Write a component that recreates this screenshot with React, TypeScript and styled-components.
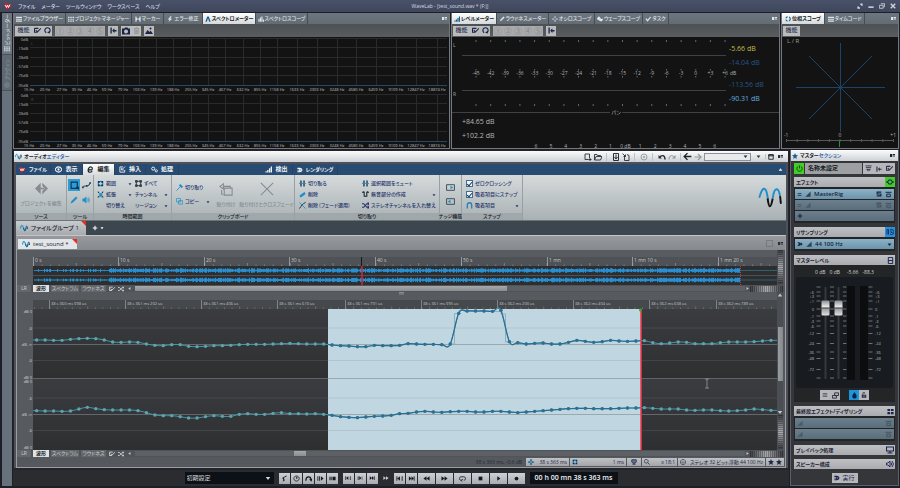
import React from "react";
import styled, { createGlobalStyle, css } from "styled-components";

const GlobalStyle = createGlobalStyle`
  * { box-sizing: border-box; }
  html, body { margin: 0; padding: 0; background: #1d1f28; }
  body, button, input, select {
    font-family: "Open Sans", "Noto Sans CJK JP", sans-serif;
    font-feature-settings: "palt";
    font-size: 5px;
    line-height: 7px;
  }
  button, select, input { border: 0; margin: 0; padding: 0; background: none; color: inherit; }
  a { color: inherit; text-decoration: none; }
  svg { display: block; flex: none; }
`;

/* ---------- icons ---------- */

const blue = "#1d8fcc";

const glyphs: Record<string, React.ReactNode> = {
  logo: (
    <>
      <path d="M1 1 L16 8 L4 16 Z" fill="#d8202c" />
      <path d="M2 6 L5 11 L7 6 L9 11 L12 5" fill="none" stroke="#fff" strokeWidth="1.8" />
    </>
  ),
  list: <path d="M0 2h16v3H0zM0 7h16v3H0zM0 12h16v3H0z" fill="currentColor" />,
  grid: <path d="M0 2h4v3H0zM6 2h4v3H6zM12 2h4v3h-4zM0 7h4v3H0zM6 7h4v3H6zM12 7h4v3h-4zM0 12h4v3H0zM6 12h4v3H6zM12 12h4v3h-4z" fill="currentColor" />,
  marker: <path d="M1 1h3v14H1zM12 1h3v14h-3zM4 4l4 4-4 4zM12 4L8 8l4 4z" fill="currentColor" />,
  bolt: <path d="M10 0L2 9h5l-3 7 10-9H9l3-7z" fill="currentColor" />,
  peak: <path d="M1 15L6 1h4l5 14h-4L8 6l-3 9z" fill="currentColor" />,
  bars: <path d="M1 8h3v7H1zM5 4h3v11H5zM9 1h3v14H9zM13 9h3v6h-3z" fill="currentColor" />,
  steps: <path d="M1 12h3v3H1zM5 9h3v6H5zM9 5h3v10H9zM13 1h3v14h-3z" fill="currentColor" />,
  pen: <path d="M2 14l2-5 8-8 3 3-8 8z" fill="currentColor" />,
  cross4: <path d="M8 0l3 4H5zM8 16l3-4H5zM0 8l4-3v6zM16 8l-4-3v6zM7 7h2v2H7z" fill="currentColor" />,
  wave: <path d="M0 8c2-8 6-8 8-5s5 8 8 3c0 9-5 9-8 7S2 11 0 8z" fill="currentColor" />,
  check: <path d="M1 8l3-2 3 4 7-9 2 2-9 12z" fill="currentColor" />,
  scope: <circle cx="8" cy="8" r="6" fill="none" stroke="currentColor" strokeWidth="3" strokeDasharray="6 3.4" />,
  menu: <path d="M0 3h7v10H0zM9 3h7v3H9zM9 7h7v2H9zM9 11h7v2H9z" fill="currentColor" />,
  checkbox: <path d="M1 3h9M1 3v9h7M4 7l4 4 8-8" fill="none" stroke="currentColor" strokeWidth="2.6" />,
  loop: <path d="M5 13a6 6 0 1 1 6 0M8 12l4 1v-4" fill="none" stroke="currentColor" strokeWidth="2.6" />,
  snapLeft: <path d="M1 1h3v14H1zM5 8l5-5v4h5v3h-5v4z" fill="currentColor" />,
  camera: <path fillRule="evenodd" d="M0 3h5l1-2h5l1 2h4v12H0zM8 5a4 4 0 1 0 .1 0z" fill="currentColor" />,
  trash: <path d="M2 4h12M6 2h4M4 4v11h8V4M7 7v6M9 7v6" fill="none" stroke="currentColor" strokeWidth="1.6" />,
  picture: <path d="M0 14l5-8 4 4 2-3 5 7zM9 3a2 2 0 1 0 4 0 2 2 0 1 0-4 0" fill="currentColor" />,
  expand: <path d="M9 1h6v6h-4V5H9zM1 9h4v2h3v4H1z" fill="currentColor" />,
  min: <path d="M1 9h14v4H1z" fill="currentColor" />,
  restore: <path d="M5 2h10v8h-3M1 6h10v8H1z" fill="none" stroke="currentColor" strokeWidth="2.2" />,
  close: <path d="M2 2l12 12M14 2L2 14" stroke="currentColor" strokeWidth="3.4" />,
  sine: (
    <>
      <path d="M1 9C2 1 5 1 7 8s4 7 5 0" fill="none" stroke={blue} strokeWidth="2.2" />
      <path d="M7 8c2 8 4 7 5 0s3-4 3 2" fill="none" stroke="#1c5a80" strokeWidth="2" />
    </>
  ),
  bigSine: (
    <>
      <path d="M1 8C3 1 5 1 6 6l.6 3" fill="none" stroke={blue} strokeWidth="1.3" strokeLinecap="round" />
      <path d="M6.400 9c1 7 2 7 3.400 0" fill="none" stroke="#111" strokeWidth="1.300" />
      <path d="M9.800 9c1-8 4-8 5-1" fill="none" stroke={blue} strokeWidth="1.300" />
      <path d="M14.800 8l.4 4" fill="none" stroke="#111" strokeWidth="1.300" strokeLinecap="round" />
    </>
  ),
  eye: (
    <>
      <path d="M0 8c4-8 12-8 16 0-4 8-12 8-16 0z" fill="none" stroke="currentColor" strokeWidth="2.4" />
      <circle cx="8" cy="8" r="2.600" fill="currentColor" />
    </>
  ),
  editE: <path d="M3 9h8c4-7-5-10-8-2-2 8 4 9 9 5" fill="none" stroke="currentColor" strokeWidth="2.600" />,
  insert: <path d="M9 2H2v12h11V9M14 1L7 8M6 4v5h5" fill="none" stroke="currentColor" strokeWidth="2" />,
  gears: (
    <>
      <circle cx="5" cy="6" r="3.500" fill="none" stroke="currentColor" strokeWidth="2.200" />
      <circle cx="12" cy="11" r="2.600" fill="none" stroke="currentColor" strokeWidth="2" />
    </>
  ),
  render: <path fillRule="evenodd" d="M1 2h6c10 0 10 12 0 12H1v-3h5V9H1V7h5V5H1zM9 6v4l3-2z" fill="currentColor" />,
  source: <path d="M7 1v14L0 8zM9 1l7 7-7 7v-4l3-3-3-3zM2 7h9v2H2z" fill="currentColor" />,
  selectBox: <path d="M2 2h11v11H2zM11 11h4v4" fill="none" stroke="#10334e" strokeWidth="2" />,
  curve: (
    <>
      <path d="M1 11c5-6 9 3 14-8" fill="none" stroke="#30557a" strokeWidth="1.800" />
      <path d="M0 10h3v3H0zM7 7h3v3H7zM13 2h3v3h-3z" fill="#26415e" />
    </>
  ),
  pencil: <path d="M1 15l2-5 9-9 3 3-9 9z" fill={blue} />,
  speaker: (
    <>
      <path d="M1 5h3l5-4v14l-5-4H1z" fill={blue} />
      <path d="M11 5q3 3 0 6M13 3q4 5 0 10" fill="none" stroke={blue} strokeWidth="1.600" />
    </>
  ),
  range: (
    <>
      <circle cx="8" cy="8" r="5" fill="none" stroke={blue} strokeWidth="3" />
      <path d="M2 2h4v4H2zM10 2h4v4h-4zM2 10h4v4H2zM10 10h4v4h-4z" fill="#142b44" />
    </>
  ),
  extend: (
    <>
      <path d="M1 1l5 1-3 3zM15 1l-5 1 3 3zM1 15l5-1-3-3zM15 15l-5-1 3-3z" fill="#142b44" />
      <path d="M5 5h7v8H5z" fill={blue} />
    </>
  ),
  all: <path d="M3 3h10v10H3zM1 1h4v4H1zM11 1h4v4h-4zM1 11h4v4H1zM11 11h4v4h-4z" fill="none" stroke="#1b2430" strokeWidth="1.800" />,
  cut: <path d="M1 15L9 7M8 2l6 6M10 1l5 5-3 2-4-4z" fill={blue} stroke={blue} strokeWidth="2" />,
  copy: <path d="M1 1h9v8H1zM6 6h9v8H6z" fill="none" stroke={blue} strokeWidth="1.600" />,
  paste: <path d="M5 5V2L1 5l4 3V5h8v2M3 9v5h2M6 7h9v8H6z" fill="none" stroke="currentColor" strokeWidth="1.200" />,
  bigX: <path d="M1 1l14 14M15 1L1 15" stroke="currentColor" strokeWidth="1.200" />,
  trim: (
    <>
      <path d="M3 1h3v14H3zM10 1h3v14h-3z" fill="#16324c" />
      <path d="M0 7h16v2H0z" fill={blue} />
    </>
  ),
  erase: <path d="M1 11L8 5l5-3 2 5-8 6-4 2z" fill={blue} />,
  fadeX: (
    <>
      <path d="M1 1l14 14" stroke={blue} strokeWidth="2" />
      <path d="M15 1C8 4 6 8 1 15" fill="none" stroke="#1b2430" strokeWidth="2" />
    </>
  ),
  silence: <path d="M0 3h5v9h6V3h5M5 3l-2-2M11 3l2-2" fill="none" stroke="#16222e" strokeWidth="2.400" />,
  swap: <path d="M0 4h4l7 8h5M0 12h4l7-8h5M13 1l3 3-3 3M13 9l3 3-3 3" fill="none" stroke="currentColor" strokeWidth="2.400" />,
  nudgeR: (
    <>
      <path d="M1 3h14v10H1z" fill="none" stroke="#39444d" strokeWidth="1.600" />
      <path d="M8 5v6l5-3z" fill={blue} />
    </>
  ),
  nudgeL: (
    <>
      <path d="M1 3h14v10H1z" fill="none" stroke="#39444d" strokeWidth="1.600" />
      <path d="M8 5v6L3 8z" fill={blue} />
    </>
  ),
  magnet: <path d="M3 15V7c0-7 10-7 10 0v8" fill="none" stroke="#2b7fb4" strokeWidth="3" />,
  newDoc: <path d="M11 10V2H2v11h7M9 13h6M12 10v6" fill="none" stroke="currentColor" strokeWidth="1.800" />,
  folder: <path d="M1 14V3h5l1 2h6v2M1 14l3-7h12l-3 7z" fill="none" stroke="currentColor" strokeWidth="1.800" />,
  save: <path d="M3 1h10v14H3zM8 3v7M5 8l3 4 3-4" fill="none" stroke="currentColor" strokeWidth="2" />,
  saveAs: <path d="M5 5v10h9V5L10 3M1 1l6 6M7 3v4H3" fill="none" stroke="currentColor" strokeWidth="1.800" />,
  disc: (
    <>
      <circle cx="8" cy="8" r="6" fill="none" stroke="currentColor" strokeWidth="1.800" />
      <circle cx="8" cy="8" r="2" fill="currentColor" />
    </>
  ),
  undo: (
    <>
      <path d="M1 4v7h7z" fill="currentColor" />
      <path d="M3 9c4-6 11-5 11 4" fill="none" stroke="currentColor" strokeWidth="2.800" />
    </>
  ),
  redo: (
    <>
      <path d="M15 4v7H8z" fill="currentColor" />
      <path d="M13 9C9 3 2 4 2 13" fill="none" stroke="currentColor" strokeWidth="2" />
    </>
  ),
  left: <path d="M8 2L2 8l6 6M2 8h13" fill="none" stroke="currentColor" strokeWidth="2.400" />,
  right: <path d="M8 2l6 6-6 6M14 8H1" fill="none" stroke="currentColor" strokeWidth="2.400" />,
  down: <path d="M2 5h12l-6 8z" fill="currentColor" />,
  up: <path d="M2 12h12L8 4z" fill="currentColor" />,
  triL: <path d="M11 3v10L4 8z" fill="currentColor" />,
  triR: <path d="M5 3v10l7-5z" fill="currentColor" />,
  windowBox: <path d="M2 2h12v3H2zM2 2h12v12H2z" fill="none" stroke="currentColor" strokeWidth="2.400" />,
  frame: <path d="M1 1h14v14H1z" fill="none" stroke="currentColor" strokeWidth="1.600" />,
  star: <path d="M8 0l2.300 5.500 5.700.4-4.400 3.800L13 16 8 12.600 3 16l1.400-6.300L0 5.900l5.700-.4z" fill="currentColor" />,
  power: <path d="M5 3a6 6 0 1 0 6 0M8 1v7" fill="none" stroke="currentColor" strokeWidth="2" />,
  plus: <path d="M8 2v12M2 8h12" stroke="currentColor" strokeWidth="2.800" />,
  bypass: <path d="M1 3h14M4 7h8v6H4z" fill="none" stroke="currentColor" strokeWidth="2.200" />,
  filter: <path d="M1 2h14M2 6h12M8 14l-4-4h8z" fill="none" stroke="currentColor" strokeWidth="2" />,
  link: <path d="M0 8h3M13 8h3M6 4h4l3 4-3 4H6L3 8z" fill="none" stroke="currentColor" strokeWidth="2.200" />,
  eq: <path d="M2 5h12M2 11h12" stroke="currentColor" strokeWidth="2.400" />,
  ramp: <path d="M1 15L15 1v14z" fill="currentColor" fillOpacity=".75" />,
  solo: <path d="M14 3H3v5h10v5H2" fill="none" stroke="currentColor" strokeWidth="3" />,
  hifi: <path d="M2 3v10M2 3h3v10M8 4a5 5 0 1 1 0 8M10 5v4h3" fill="none" stroke="currentColor" strokeWidth="1.800" />,
  resample: <path d="M1 3h5l5 5-5 5H1l4-5zM10 3l5 5-5 5" fill="currentColor" />,
  strip: <path d="M3 1h10v14H3zM3 8h10" fill="none" stroke="currentColor" strokeWidth="2.200" />,
  copies: <path d="M6 2h9v6H6zM1 8h9v6H1z" fill="none" stroke="currentColor" strokeWidth="2.200" />,
  drop: <path d="M8 0c2 5 5 6 5 10a5 5 0 0 1-10 0c0-4 3-5 5-10z" fill="currentColor" />,
  lock: <path fillRule="evenodd" d="M2 7h12v8H2zM7 9h2v4H7zM4 7V4c0-4 7-4 7-1v1H9c0-2-3-2-3 0v3z" fill="currentColor" />,
  quad: <path d="M1 2h6v5H1zM9 2h6v5H9zM1 9h6v5H1zM9 9h6v5H9z" fill="currentColor" />,
  monitor: <path d="M1 2h14v8H1zM8 10v4M3 14h10" fill="none" stroke="currentColor" strokeWidth="2.200" />,
  speakerOut: <path d="M1 6h3l4-4v12l-4-4H1zM10 5q3 3 0 6M12 2q6 6 0 12" fill="none" stroke="currentColor" strokeWidth="1.800" />,
  tap: (
    <>
      <path d="M3 6h4v8z" fill="currentColor" />
      <path d="M4 7l9-5M4 14l5-3" fill="none" stroke="currentColor" strokeWidth="2" />
    </>
  ),
  clock: <path d="M8 2a6 6 0 1 0 .1 0zM8 4v4l3-2" fill="none" stroke="currentColor" strokeWidth="1.800" />,
  arc: <path d="M2 13C2 2 13 2 14 11M11 9l3 4 2-4" fill="none" stroke="currentColor" strokeWidth="2.800" />,
  barsPlay: <path d="M1 3h2v10H1zM5 3h2v10H5zM9 3l6 5-6 5z" fill="currentColor" />,
  barsStop: <path d="M1 4h2v8H1zM4 4h2v8H4zM8 4h7v8H8z" fill="currentColor" />,
  toStart: <path d="M1 3h2v10H1zM9 3v10L3 8zM13 3h2v10h-2z" fill="currentColor" />,
  stepPlay: <path d="M2 3h2v10H2zM6 3l6 5-6 5zM13 3h1v10h-1z" fill="currentColor" />,
  toEnd: <path d="M13 3h2v10h-2zM2 3l6 5-6 5zM8 3l5 5-5 5z" fill="currentColor" />,
  rew: <path d="M8 3v10L1 8zM15 3v10L8 8z" fill="currentColor" />,
  ffw: <path d="M1 3v10l7-5zM8 3v10l7-5z" fill="currentColor" />,
  cycle: <path d="M5 12C-2 11 0 4 6 4h4c6 0 7 7 1 8M7 15l-2-3 4-2" fill="none" stroke="currentColor" strokeWidth="2" />,
  stop: <path d="M2 2h12v12H2z" fill="currentColor" />,
  play: <path d="M4 1v14l10-7z" fill="currentColor" />,
  rec: <circle cx="8" cy="8" r="6" fill="currentColor" />,
  cursorIcon: (
    <>
      <path d="M8 0v16M1 8h14" stroke={blue} strokeWidth="2.400" />
      <path d="M8 0l3 4H5zM8 16l3-4H5zM0 8l4-3v6zM16 8l-4-3v6z" fill="#1d3e66" />
    </>
  ),
  cup: <path d="M2 2h12v6l-3 3H5L2 8zM4 14h8M8 11v3" fill="#65758e" stroke="currentColor" strokeWidth="2" />,
  zoom: <path d="M6 1a5 5 0 1 0 .1 0zM10 10l5 5" fill="none" stroke="currentColor" strokeWidth="2" />,
  sound: <path d="M8 1a7 7 0 1 0 .1 0zM4 9q4 4 8 0M5 6h2M9 6h2" fill="none" stroke="currentColor" strokeWidth="1.600" />,
};

const Icon = ({ name, size = 7, color }: { name: string; size?: number; color?: string }) => (
  <svg viewBox="0 0 16 16" width={size} height={size} color={color} aria-hidden="true">
    {glyphs[name]}
  </svg>
);

/* ---------- frame ---------- */

const Shell = styled.div`
  display: flex;
  flex-direction: column;
  min-height: 100vh;
  background: #1d1f28;
  color: #c9ccd0;
  overflow: hidden;
`;

const TitleBar = styled.header`
  display: grid;
  grid-template-columns: 1fr auto 1fr;
  align-items: center;
  height: 12px;
  padding: 0 4px;
  background: linear-gradient(#495169, #3f475c);
  color: #d8dbe2;
  font-weight: 500;
`;

const Menu = styled.nav`
  display: flex;
  align-items: center;
  gap: 6px;
`;

const WindowControls = styled.div`
  display: flex;
  justify-content: flex-end;
  gap: 5px;
  color: #d5d8de;
`;

const PlainButton = styled.button`
  display: flex;
  align-items: center;
  justify-content: center;
`;

const Body = styled.div`
  flex: 1;
  display: flex;
  gap: 1px;
  padding: 1px 1px 2px 2px;
`;

const Rail = styled.aside`
  width: 10px;
  flex: none;
  display: flex;
  flex-direction: column;
  background: #67717b;
`;

const RailTab = styled.button<{ $dim?: boolean }>`
  writing-mode: vertical-rl;
  text-orientation: sideways;
  transform: rotate(180deg);
  display: flex;
  align-items: center;
  gap: 1px;
  width: 10px;
  padding: 2px 0;
  height: ${(p) => (p.$dim ? 36 : 42)}px;
  white-space: nowrap;
  color: ${(p) => (p.$dim ? "#8f989f" : "#e6e9ec")};
  background: ${(p) => (p.$dim ? "#5f6972" : "#6d7781")};
  border-top: 1px solid #4a535c;
`;

const Main = styled.div`
  flex: 1;
  min-width: 0;
  display: flex;
  flex-direction: column;
  gap: 1px;
`;

const MeterRow = styled.div`
  display: grid;
  grid-template-columns: minmax(0, 437fr) minmax(0, 329fr) minmax(0, 118fr);
  gap: 1px;
`;

const Panel = styled.section`
  display: flex;
  flex-direction: column;
  border: 1px solid #74777b;
  border-top: 0;
  background: #131313;
`;

const TabStrip = styled.div`
  display: flex;
  height: 11px;
  background: linear-gradient(#6d7680, #626c74);
  color: #e0e4e7;
`;

const Tab = styled.button<{ $w: number; $on?: boolean }>`
  display: flex;
  align-items: center;
  justify-content: center;
  gap: 1px;
  width: ${(p) => p.$w}px;
  flex: none;
  white-space: nowrap;
  font-weight: 500;
  border-right: 1px solid #454c54;
  ${(p) =>
    p.$on &&
    css`
      background: linear-gradient(#fff, #d5d8da);
      color: #14181c;
      font-weight: 700;
    `}
`;

const Spacer = styled.span`
  flex: 1;
`;

const StripMenu = styled(PlainButton)`
  width: 9px;
  color: #e3e6e8;
`;

const Tools = styled.div`
  display: flex;
  align-items: center;
  gap: 3px;
  height: 13px;
  padding: 0 1px;
  background: linear-gradient(#4e5153, #5a5d60);
`;

const ToolSet = styled.div<{ $muted?: boolean }>`
  display: flex;
  height: 10px;
  background: ${(p) => (p.$muted ? "#a9aaab" : "#b9bbbd")};
  color: ${(p) => (p.$muted ? "#8d8e90" : "#1b2447")};
`;

const ToolButton = styled(PlainButton)<{ $w?: number; $dim?: boolean }>`
  width: ${(p) => p.$w ?? 10}px;
  font-size: ${(p) => (p.$dim ? 8 : 6)}px;
  ${(p) => p.$dim && "color: #85868a;"}
`;

const Chart = styled.svg`
  width: 100%;
  height: auto;
  flex: none;
  text {
    font-family: "Open Sans", "Noto Sans CJK JP", sans-serif;
  }
`;

const PanelTabs = ({ tabs }: { tabs: [string, string, number, boolean?][] }) => (
  <TabStrip role="tablist">
    {tabs.map(([icon, label, w, on]) => (
      <Tab key={label} role="tab" aria-selected={!!on} $w={w} $on={on}>
        <Icon name={icon} size={6} color={on ? "#14608f" : undefined} />
        {label}
      </Tab>
    ))}
    <Spacer />
    <StripMenu aria-label="パネルメニュー">
      <Icon name="menu" size={5} />
    </StripMenu>
  </TabStrip>
);

const PanelTools = ({ capture, presets = true }: { capture?: boolean; presets?: boolean }) => (
  <Tools>
    <ToolSet>
      <ToolButton $w={17}>機能</ToolButton>
      {presets && (
        <>
          <ToolButton aria-label="設定">
            <Icon name="checkbox" />
          </ToolButton>
          <ToolButton aria-label="リセット">
            <Icon name="loop" />
          </ToolButton>
        </>
      )}
    </ToolSet>
    {presets && (
      <>
        <ToolSet $muted>
          {["①", "②", "③", "④", "⑤"].map((n) => (
            <ToolButton key={n} $dim>
              {n}
            </ToolButton>
          ))}
        </ToolSet>
        <ToolSet>
          <ToolButton aria-label="先頭へ">
            <Icon name="snapLeft" />
          </ToolButton>
        </ToolSet>
      </>
    )}
    {capture && (
      <>
        <ToolSet>
          <ToolButton aria-label="スナップショット">
            <Icon name="camera" size={8} />
          </ToolButton>
          <ToolButton aria-label="削除" $dim>
            <Icon name="trash" />
          </ToolButton>
        </ToolSet>
        <ToolSet>
          <ToolButton aria-label="画像">
            <Icon name="picture" size={8} />
          </ToolButton>
        </ToolSet>
      </>
    )}
  </Tools>
);

/* ---------- meters ---------- */

const freqs: [number, string][] = [
  [29, "15 Hz"], [45, "20 Hz"], [62, "27 Hz"], [77, "35 Hz"], [92, "46 Hz"], [107, "59 Hz"], [123, "79 Hz"],
  [139, "103 Hz"], [156, "139 Hz"], [173, "188 Hz"], [191, "255 Hz"], [208, "345 Hz"], [225, "467 Hz"],
  [243, "632 Hz"], [260, "855 Hz"], [277, "1158 Hz"], [297, "1633 Hz"], [317, "2303 Hz"], [337, "3248 Hz"],
  [356, "4580 Hz"], [376, "6459 Hz"], [396, "9109 Hz"], [416, "12847 Hz"], [437, "18874 Hz"],
];

const Spectrometer = () => (
  <Chart viewBox="14 37 435 111" role="img" aria-label="スペクトロメーター">
    {[0, 56].map((dy) => (
      <g key={dy}>
        {["0dB", "-19dB", "-38dB", "-57dB", "-76dB", "-95dB"].map((t, i) => (
          <g key={t}>
            <text x="28" y={40.500 + dy + i * 9.200} fontSize="4" fill="#b0b0b0" textAnchor="end">
              {t}
            </text>
            <path d={`M30 ${38.500 + dy + Math.round(i * 9.300)}H447`} stroke={i === 5 ? "#234868" : "#2a2a2a"} />
          </g>
        ))}
        {freqs.map(([x, t], i) => (
          <g key={t}>
            {i > 0 && <path d={`M${x + 0.500} ${39 + dy}v46`} stroke="#2a2a2a" />}
            <text x={x} y={91 + dy} fontSize="4" fill="#c0c0c0" textAnchor="middle">
              {t}
            </text>
          </g>
        ))}
        <text x="31" y={45 + dy} fontSize="4" fill="#4c4c4c">
          {dy ? "R" : "L"}
        </text>
      </g>
    ))}
  </Chart>
);

const levelX = (i: number) => 476 + i * 14.650;

const LevelMeter = () => (
  <Chart viewBox="452 37 327 111" role="img" aria-label="レベルメーター">
    <g fill="#9c9ea0" fontSize="5">
      <text x="453" y="47">L</text>
      <text x="453" y="96">R</text>
    </g>
    <path d="M462 55.500H726M462 90.500H726M452 112.500H610M622 112.500H779" stroke="#3f4042" />
    {Array.from({ length: 18 }, (_, i) => {
      const v = -45 + i * 3;
      return (
        <g key={i}>
          <path d={`M${levelX(i)} 40v2M${levelX(i)} 104v2M${levelX(i)} 69v1.500M${levelX(i)} 76v1.500`} stroke="#66696b" />
          <text x={levelX(i)} y="75" fontSize="5" fill="#b0b2b4" textAnchor="middle">
            {v > 0 ? `+${v}` : v}
          </text>
        </g>
      );
    })}
    <g fontSize="5" fill="#b0b2b4">
      <text x="730" y="75">dB</text>
      <text x="616" y="114" textAnchor="middle">パン</text>
      {["6", "5", "4", "3", "2", "1", "0 dB", "1", "2", "3", "4", "5", "6"].map((t, i) => (
        <text key={i} x={536 + i * 14.900} y="147.500" textAnchor="middle">
          {t}
        </text>
      ))}
    </g>
    <g fontSize="7">
      <text x="462" y="124" fill="#b5b7b9">+84.65 dB</text>
      <text x="462" y="138" fill="#b5b7b9">+102.2 dB</text>
      <text x="729" y="51" fill="#c0bb4e">-5.66 dB</text>
      <text x="729" y="65" fill="#285583">-14.04 dB</text>
      <text x="729" y="87" fill="#285583">-113.56 dB</text>
      <text x="729" y="101" fill="#60b0e4">-90.31 dB</text>
    </g>
  </Chart>
);

const PhaseScope = () => (
  <Chart viewBox="782 37 116 111" role="img" aria-label="位相スコープ">
    <path d="M796 87.500H885M840.500 43V132M809 56L872 119M872 56L809 119" stroke="#1e4368" />
    <text x="787" y="43" fontSize="6" fill="#9c9ea0">L / R</text>
    <path d="M786 140.500H894" stroke="#55585a" />
    {Array.from({ length: 11 }, (_, i) => (
      <path key={i} d={`M${786.500 + i * 10.700} 139v3`} stroke="#55585a" />
    ))}
    <g fontSize="5" fill="#b0b2b4">
      <text x="784" y="137">-1</text>
      <text x="840" y="137" textAnchor="middle">0</text>
      <text x="896" y="137" textAnchor="end">+1</text>
    </g>
    <path d="M839.500 141v6" stroke="#1c9a2c" />
  </Chart>
);

/* ---------- editor ---------- */

const LowerRow = styled.div`
  flex: 1;
  display: grid;
  grid-template-columns: minmax(0, 1fr) 109px;
  gap: 1px;
`;

const EditorColumn = styled.div`
  display: flex;
  flex-direction: column;
  background: #2b2c30;
`;

const EditorWindow = styled.section`
  border: 1px solid #23252b;
  border-bottom-width: 2px;
  background: #4d5056;
`;

const EditorTitle = styled.div`
  display: flex;
  align-items: center;
  height: 11px;
  padding: 0 3px 0 1px;
  gap: 2px;
  background: linear-gradient(#fbfbfb, #cdd1d5);
  color: #20252b;
`;

const Heading = styled.h2`
  margin: 0;
  font-size: 5px;
  font-weight: 700;
  white-space: nowrap;
  color: #1b2026;
  span {
    color: #3c6ba8;
  }
`;

const TitleTools = styled.div`
  display: flex;
  gap: 2px;
  padding: 0 4px 0 3px;
  border-right: 1px solid #bfc3c7;
  color: #2b3036;
`;

const Dim = styled(PlainButton)`
  color: #94989c;
`;

const SelectBox = styled.label<{ $w: number; $dark?: boolean }>`
  position: relative;
  display: flex;
  align-items: center;
  width: ${(p) => p.$w}px;
  height: ${(p) => (p.$dark ? 12 : 8)}px;
  background: ${(p) => (p.$dark ? "#0b1117" : "#e8eaec")};
  border: 1px solid ${(p) => (p.$dark ? "#0b1117" : "#8d9298")};
  color: ${(p) => (p.$dark ? "#d5d8dc" : "#1c2b46")};
  select {
    appearance: none;
    width: 100%;
    height: 100%;
    outline: 0;
    font-size: 6px;
    padding-left: 1px;
  }
  svg {
    position: absolute;
    right: 2px;
    pointer-events: none;
  }
`;

const EditorBody = styled.div`
  margin: 2px 2px 0;
`;

const RibbonTabs = styled.div`
  display: flex;
  height: 11px;
  background: #284b72;
  color: #f0f4f8;
`;

const RibbonTab = styled.button<{ $w: number; $on?: boolean; $kana?: boolean }>`
  display: flex;
  align-items: center;
  justify-content: center;
  gap: 3px;
  width: ${(p) => p.$w}px;
  font-size: ${(p) => (p.$kana ? 5 : 6)}px;
  font-weight: 700;
  border-right: 1px solid #23436a;
  white-space: nowrap;
  ${(p) => p.$on && "background: linear-gradient(#fff, #d9dcdc); color: #16202c;"}
`;

const Ribbon = styled.div`
  display: flex;
  height: 46px;
  background: linear-gradient(#d6dadb, #a8b1b4);
  color: #24336a;
  border-bottom: 1px solid #6d7477;
  button,
  label {
    font-weight: 500;
  }
`;

const Group = styled.div<{ $w: number }>`
  display: flex;
  flex-direction: column;
  width: ${(p) => p.$w}px;
  flex: none;
  border-right: 1px solid #98a0a3;
`;

const GroupBody = styled.div<{ $cols: string }>`
  flex: 1;
  display: grid;
  grid-template-columns: ${(p) => p.$cols};
  align-items: center;
  padding: 2px 0 1px;
`;

const GroupName = styled.div`
  display: flex;
  justify-content: center;
  height: 7px;
  white-space: nowrap;
  font-weight: 500;
  color: #10151a;
  background: #a0a8ab;
`;

const Stack = styled.div<{ $pad?: number }>`
  display: flex;
  flex-direction: column;
  justify-content: space-evenly;
  height: 100%;
  padding-left: ${(p) => p.$pad ?? 0}px;
`;

const Command = styled.button`
  display: flex;
  align-items: center;
  gap: 2px;
  height: 9px;
  padding-right: 3px;
  white-space: nowrap;
  i {
    width: 7px;
    flex: none;
  }
`;

const BigCommand = styled.button`
  display: flex;
  flex-direction: column;
  align-items: center;
  gap: 5px;
  color: #858b90;
  white-space: nowrap;
`;

const IconPad = styled.div`
  display: grid;
  grid-template-columns: 1fr 1fr;
  grid-auto-rows: 15px;
  padding: 2px 1px 0;
  align-self: start;
`;

const PadButton = styled(PlainButton)<{ $on?: boolean }>`
  width: 12px;
  height: 12px;
  ${(p) => p.$on && "background: #2c9bd6;"}
`;

const CheckLabel = styled.label`
  display: flex;
  align-items: center;
  gap: 2px;
  height: 9px;
  white-space: nowrap;
  input {
    appearance: none;
    position: relative;
    width: 7px;
    height: 7px;
    background: #f4f7f9;
    border: 1px solid #3f6f96;
  }
  input:checked::after {
    content: "";
    position: absolute;
    left: 1px;
    top: 0;
    width: 2px;
    height: 4px;
    border: solid #17395c;
    border-width: 0 1px 1px 0;
    transform: rotate(40deg);
  }
`;

const RibbonLogo = styled.div`
  margin: 10px 4px 0 auto;
`;

const GroupBar = styled.div`
  display: flex;
  align-items: center;
  height: 14px;
  background: #3c464e;
  color: #fff;
`;

const FileTab = styled.button<{ $small?: boolean }>`
  position: relative;
  display: flex;
  align-items: center;
  gap: 3px;
  height: ${(p) => (p.$small ? 10 : 14)}px;
  width: ${(p) => (p.$small ? 59 : 70)}px;
  padding-left: 4px;
  background: ${(p) => (p.$small ? "#e2e6e8" : "linear-gradient(#c8cccf, #a6a9ad)")};
  color: #1c2228;
  font-size: 6px;
  font-weight: 500;
  white-space: nowrap;
  &::after {
    content: "";
    position: absolute;
    right: 0;
    top: 0;
    border-top: 5px solid #f02a16;
    border-left: 5px solid transparent;
  }
`;

const AddButtons = styled.div`
  display: flex;
  align-items: center;
  gap: 2px;
  padding-left: 6px;
`;

const FileWindow = styled.div`
  border: 1px solid #9a9da2;
  border-top-color: #c3c5c8;
  background: #55585c;
`;

const DocBar = styled.div`
  display: flex;
  align-items: flex-end;
  height: 14px;
  padding: 0 2px 1px 1px;
  background: linear-gradient(#97999d, #86898d);
  color: #2b2e32;
`;

const DocTools = styled.div`
  display: flex;
  align-items: center;
  gap: 5px;
  height: 12px;
`;

const WaveRow = styled.div`
  display: flex;
  padding-right: 2px;
`;

const WaveCell = styled.div`
  flex: 1;
  min-width: 0;
`;

const SideBar = styled.div`
  width: 6px;
  flex: none;
  display: flex;
  flex-direction: column;
  align-items: center;
  background: #4b4e52;
  color: #c5c8cb;
`;

const SideThumb = styled.div`
  width: 5px;
  height: 54px;
  margin: 29px 0 28px;
  background: linear-gradient(90deg, #9b9ea1, #85888b);
`;

const Wheel = styled.div<{ $flat?: boolean }>`
  ${(p) => (p.$flat ? "width: 33px; height: 6px;" : "width: 5px; height: 34px;")}
  background:
    repeating-linear-gradient(${(p) => (p.$flat ? "90deg" : "180deg")}, #0004 0 1px, transparent 1px 2px),
    linear-gradient(${(p) => (p.$flat ? "90deg" : "180deg")}, #3c3e42, #a9acb0 50%, #3c3e42);
`;

const ViewBar = styled.div`
  display: flex;
  align-items: center;
  height: 7px;
  padding-right: 2px;
  color: #c9ccd0;
  background: #505357;
`;

const ViewTab = styled.button<{ $w: number; $on?: boolean }>`
  width: ${(p) => p.$w}px;
  height: 7px;
  margin-right: 2px;
  flex: none;
  white-space: nowrap;
  font-weight: ${(p) => (p.$on ? 700 : 400)};
  background: ${(p) => (p.$on ? "#e0e1e2" : "#63676c")};
  color: ${(p) => (p.$on ? "#202326" : "#c9ccd0")};
`;

const ViewTools = styled.div`
  display: flex;
  gap: 3px;
  padding: 0 3px 0 1px;
`;

const ScrollTrack = styled.div`
  flex: 1;
  height: 5px;
  background: #5d6064;
`;

const ScrollThumb = styled.div<{ $at: number; $size: number }>`
  margin-left: ${(p) => p.$at}%;
  width: ${(p) => p.$size}%;
  height: 5px;
  background: linear-gradient(#a6a8aa, #8b8e90);
`;

const StatusRow = styled.footer`
  display: flex;
  align-items: center;
  justify-content: flex-end;
  gap: 1px;
  height: 10px;
  padding: 0 1px 0 0;
  color: #1c2846;
`;

const StatusCell = styled.div<{ $w: number }>`
  display: flex;
  align-items: center;
  justify-content: space-between;
  width: ${(p) => p.$w}px;
  height: 8px;
  padding: 0 2px;
  background: linear-gradient(#bfc1c4, #a3a5a8);
  white-space: nowrap;
`;

const Readout = styled.span`
  padding-right: 3px;
  color: #202a40;
`;

const rand = (seed: number) => {
  let s = seed;
  return () => {
    s = (s * 16807) % 2147483647;
    return s / 2147483647;
  };
};

const overviewBars = (cy: number, seed: number) => {
  const r = rand(seed);
  let d = "";
  for (let x = 34; x < 740; x += 1) {
    const quiet = x < 110;
    const a = quiet ? (r() > 0.65 ? 0.600 + r() * 1.200 : 0.400) : 0.800 + r() * 1.600;
    d += `M${x + 0.500} ${(cy - a).toFixed(1)}V${(cy + a).toFixed(1)}`;
  }
  return d;
};

const bars1 = overviewBars(270.500, 71);
const bars2 = overviewBars(280, 71);

const seconds: [number, string][] = [
  [33.500, "0 s"], [118.500, "10 s"], [204.500, "20 s"], [289.500, "30 s"], [375.500, "40 s"],
  [461.500, "50 s"], [547.500, "1 mn"], [632.500, "1 mn 10 s"], [718.500, "1 mn 20 s"],
];

const Overview = () => (
  <Chart viewBox="17 250 760 35" role="img" aria-label="全体波形">
    <path d="M17 250H777V285H17z" fill="#585b5f" />
    <path d="M33 257H777V266H33z" fill="#4e5155" />
    <path d="M33 266H777V285H33z" fill="#2c2e30" />
    <path d="M33 275.500H777" stroke="#4d5054" />
    {Array.from({ length: 88 }, (_, i) => (
      <path key={i} d={`M${33.500 + i * 8.560} 266v${i % 5 === 0 ? -3 : -1.500}`} stroke="#8f9296" strokeWidth=".7" />
    ))}
    {seconds.map(([x, t]) => (
      <g key={t}>
        <path d={`M${x} 257v9`} stroke="#a5a8ac" strokeWidth=".8" />
        <text x={x + 1.500} y="262" fontSize="5" fill="#c4c7ca">
          {t}
        </text>
      </g>
    ))}
    <path d="M34 270.500H777M34 280H777" stroke="#2f6f84" strokeWidth=".8" />
    <path d={bars1 + bars2} stroke="#2a8fd0" />
    <path d="M740.500 266v19" stroke="#b04050" strokeDasharray="1 1" />
    <path d="M361.500 257v9" stroke="#17181a" />
    <path d="M362 266v19" stroke="#d02836" strokeWidth="1.500" />
  </Chart>
);

const topLevels = [
  270, 270, 271, 271, 268, 266, 265, 266, 270, 276, 277, 276, 277, 282, 286, 287, 284, 284, 289, 290, 289, 287, 287,
  286, 284, 283, 283, 283, 282, 281, 280, 281, 282, 282, 282, 285, 287, 288, 290, 290, 286, 287, 287, 286, 281, 282,
  283, 283, 284, 282, 190, 183, 183, 183, 184, 181, 275, 278, 282, 280, 279, 282, 282, 277, 271, 274, 277, 275, 271,
  273, 274, 273, 272, 278, 281, 279, 276, 277, 281, 281, 281, 278, 276, 276, 276, 275, 273, 271,
];
const lowLevels = [
  167, 168, 168, 169, 168, 162, 157, 161, 164, 165, 165, 165, 167, 173, 180, 182, 182, 185, 189, 189, 185, 182, 184,
  184, 178, 176, 178, 178, 175, 173, 176, 176, 177, 176, 178, 181, 185, 187, 188, 186, 184, 183, 181, 176, 175, 171,
  169, 171, 172, 170, 169, 169, 171, 171, 169, 169, 171, 173, 171, 169, 167, 165, 163, 161, 160, 160, 161, 161, 161,
  160, 159, 159, 158, 160, 162, 162, 162, 165, 166, 165, 165, 167, 168, 167, 165, 162, 164, 166,
];

type Pt = { x: number; y: number };
const points = (values: number[], base: number): Pt[] =>
  values.map((v, i) => ({ x: 36.700 + i * 8.440, y: base + v / 3 }));

/* Catmull-Rom spline through the samples, written as cubic segments */
const spline = (p: Pt[]) => {
  let d = `M33 ${p[0].y}L${p[0].x} ${p[0].y}`;
  for (let i = 0; i < p.length - 1; i++) {
    const a = p[Math.max(0, i - 1)];
    const b = p[i];
    const c = p[i + 1];
    const e = p[Math.min(p.length - 1, i + 2)];
    const n = (v: number) => v.toFixed(2);
    d += `C${n(b.x + (c.x - a.x) / 6)} ${n(b.y + (c.y - a.y) / 5)} ${n(c.x - (e.x - b.x) / 6)} ${n(c.y - (e.y - b.y) / 5)} ${n(c.x)} ${n(c.y)}`;
  }
  return d + `L777 ${p[p.length - 1].y}`;
};

const topWave = points(topLevels, 250);
const lowWave = points(lowLevels, 355);

const rulerMarks: [number, string][] = [
  [49.500, "38 s 360 ms 998 us"], [125.500, "38 s 361 ms 202 us"], [201.500, "38 s 361 ms 406 us"],
  [277.500, "38 s 361 ms 610 us"], [345.500, "38 s 361 ms 791 us"], [421.500, "38 s 361 ms 995 us"],
  [497.500, "38 s 362 ms 200 us"], [573.500, "38 s 362 ms 404 us"], [649.500, "38 s 362 ms 608 us"],
  [716.500, "38 s 362 ms 789 us"],
];

const dbMarks: [number, string][] = [
  [311.500, "dB 0"], [328, "-6"], [344.500, "dB -∞"], [360.500, "-6"], [377, "dB 0"],
  [381.500, "dB 0"], [398, "-6"], [414.500, "dB -∞"], [430.500, "-6"], [447, "dB 0"],
];

const WaveView = () => (
  <Chart viewBox="17 292 760 158" role="img" aria-label="波形">
    <defs>
      <linearGradient id="track" x1="0" y1="0" x2="0" y2="1">
        <stop offset="0" stopColor="#3b3c3f" />
        <stop offset="1" stopColor="#2e2f31" />
      </linearGradient>
      <clipPath id="inSel">
        <path d="M328 309H641V450H328z" />
      </clipPath>
    </defs>
    <path d="M17 292H777V450H17z" fill="#575a5e" />
    <path d="M399 292.500h5M399 294h5" stroke="#a5a8ab" strokeWidth=".7" />
    <path d="M33 300H777V309H33z" fill="#46494c" />
    <path d="M33 309H777V379H33z" fill="url(#track)" />
    <path d="M33 379H777V450H33z" fill="url(#track)" />
    {Array.from({ length: 98 }, (_, i) => (
      <path key={i} d={`M${34.500 + i * 7.600} 309v${i % 5 === 2 ? -2.500 : -1.500}`} stroke="#85888b" strokeWidth=".6" />
    ))}
    {rulerMarks.map(([x, t]) => (
      <g key={t}>
        <path d={`M${x} 300v9`} stroke="#8c8f93" strokeWidth=".8" />
        <text x={x + 1.500} y="305" fontSize="4" fill="#c0c3c7">
          {t}
        </text>
      </g>
    ))}
    <path d="M328 309H641V450H328z" fill="#c0d7e1" />
    <path d="M33 328H777M33 360.500H777M33 398H777M33 430.500H777" stroke="#808990" strokeOpacity=".28" strokeWidth=".8" />
    <path d="M33 344.500H777M33 378.500H777M33 414.500H777" stroke="#808990" strokeOpacity=".6" />
    {dbMarks.map(([y, t], i) => (
      <text key={i} x="32" y={y + 1.500} fontSize="4" fill="#d0d3d6" textAnchor="end">
        {t}
      </text>
    ))}
    <path d="M450 344H454.500V313.500H459V310.500H464V311.500H501V314H505.500V342H514" fill="none" stroke="#7fa9be" strokeWidth=".8" />
    {[topWave, lowWave].map((w, k) => (
      <g key={k}>
        <path d={spline(w)} fill="none" stroke="#4b97a5" />
        {w.map((p, i) => (
          <circle key={i} cx={p.x} cy={p.y} r="1.700" fill="#5aa5b2" />
        ))}
        <g clipPath="url(#inSel)">
          <path d={spline(w)} fill="none" stroke="#2d6e90" strokeWidth="1.200" />
          {w.map((p, i) => (
            <circle key={i} cx={p.x} cy={p.y} r="1.700" fill="#2d6f95" />
          ))}
        </g>
      </g>
    ))}
    <path d="M641 309v141" stroke="#f0384c" strokeWidth="1.500" />
    <circle cx="640.500" cy="310" r="1.500" fill="#2fae2a" />
    <path d="M705 379h4M705 388h4M707 379v9" stroke="#9a9a9a" strokeWidth=".8" />
  </Chart>
);

const ViewSwitch = ({ at, size }: { at: number; size: number }) => (
  <ViewBar>
    <ViewTab $w={14}>LR</ViewTab>
    <ViewTab $w={16} $on>
      波形
    </ViewTab>
    <ViewTab $w={28}>スペクトラム</ViewTab>
    <ViewTab $w={25}>ラウドネス</ViewTab>
    <ViewTools>
      <Icon name="checkbox" size={6} />
      <Icon name="swap" size={6} />
      <Icon name="triL" size={5} />
    </ViewTools>
    <ScrollTrack>
      <ScrollThumb $at={at} $size={size} />
    </ScrollTrack>
    <Icon name="triR" size={5} />
    <Wheel $flat />
  </ViewBar>
);

/* ---------- transport ---------- */

const Transport = styled.div`
  flex: 1;
  display: flex;
  align-items: center;
  justify-content: center;
  gap: 5px;
`;

const ButtonSet = styled.div`
  display: flex;
  gap: 1px;
`;

const TransportButton = styled(PlainButton)<{ $w: number }>`
  width: ${(p) => p.$w}px;
  height: 11px;
  background: linear-gradient(#cfd1d8, #a9abb3);
  color: #16181e;
`;

const TimeDisplay = styled.output`
  width: 88px;
  height: 12px;
  line-height: 12px;
  font-size: 7px;
  font-weight: 600;
  text-align: center;
  white-space: nowrap;
  background: #0b1117;
  color: #f0f2f4;
`;

const Arrows = styled.span`
  color: #c5c8cc;
`;

/* ---------- master section ---------- */

const Master = styled.aside`
  display: flex;
  flex-direction: column;
  border: 1px solid #5d6068;
  border-top: 0;
  background: #35363a;
`;

const MasterBody = styled.div`
  display: flex;
  flex-direction: column;
  margin: 2px 1px 0;
  padding: 0 2px;
`;

const NameRow = styled.div`
  display: flex;
  gap: 1px;
  height: 11px;
  margin-bottom: 3px;
`;

const Power = styled(PlainButton)`
  width: 10px;
  background: #42cc28;
  color: #10400c;
`;

const NameField = styled.input`
  flex: 1;
  min-width: 0;
  padding: 0 3px;
  background: #9d9fa2;
  color: #1b2126;
  font-size: 6px;
  font-weight: 700;
`;

const NameTools = styled.div`
  display: flex;
  align-items: center;
  justify-content: space-around;
  width: 32px;
  background: #b5b7ba;
  color: #2b3046;
`;

const SectionHead = styled.h3<{ $gap?: number }>`
  display: flex;
  align-items: center;
  justify-content: space-between;
  height: 10px;
  margin: ${(p) => p.$gap ?? 0}px 0 0;
  padding-left: 2px;
  font-size: 5px;
  font-weight: 700;
  background: linear-gradient(#bfc0c3, #a9abae);
  color: #1b2030;
`;

const HeadButton = styled(PlainButton)<{ $bg?: string }>`
  width: 10px;
  height: 10px;
  background: ${(p) => p.$bg ?? "transparent"};
  color: #1b2350;
`;

const Slots = styled.div`
  display: flex;
  flex-direction: column;
  gap: 1px;
  padding: 2px 1px;
  background: #232428;
`;

const Slot = styled.button<{ $on?: boolean }>`
  display: flex;
  align-items: center;
  gap: 3px;
  height: 10px;
  padding: 0 2px;
  font-size: 6px;
  font-weight: 600;
  background: ${(p) => (p.$on ? "linear-gradient(#8db2c6, #6b93aa)" : "linear-gradient(#6b7f8c, #5a6d7a)")};
  color: ${(p) => (p.$on ? "#15263a" : "#43545f")};
`;

const LevelBox = styled.div`
  display: flex;
  flex-direction: column;
  align-items: center;
  padding: 2px 2px 2px;
  background: #242527;
  color: #d0d2d4;
`;

const LevelValues = styled.div`
  display: flex;
  gap: 4px;
  height: 10px;
  align-items: center;
  span:nth-child(3) {
    margin-left: 3px;
  }
`;

const MixButtons = styled.div`
  display: flex;
  gap: 9px;
  margin-top: 2px;
`;

const MixSet = styled.div`
  display: flex;
  height: 10px;
  background: #b5b7ba;
  color: #2b3046;
`;

const MixButton = styled(PlainButton)<{ $on?: boolean }>`
  width: 10px;
  ${(p) => p.$on && "background: #1f93dc; color: #06233c;"}
`;

const RunButton = styled(PlainButton)`
  align-self: center;
  gap: 2px;
  width: 26px;
  height: 10px;
  margin-top: 4px;
  background: #b5b7ba;
  color: #1b2450;
  font-size: 6px;
`;

const scale: [number, string][] = [
  [292, "+6"], [296, "+3"], [301, "+1"], [309, "0"], [316, "-1"], [321, "-3"], [326, "-6"],
  [333.500, "-12"], [343.500, "-24"], [352, "-36"], [358.500, "-48"], [369.500, "-72"],
];

const MasterMeter = () => (
  <Chart viewBox="796 277 97 111" role="img" aria-label="マスターレベル">
    <defs>
      <linearGradient id="cap" x1="0" y1="0" x2="0" y2="1">
        <stop offset="0" stopColor="#8a8d90" />
        <stop offset=".45" stopColor="#f2f2f2" />
        <stop offset=".55" stopColor="#9a9c9e" />
        <stop offset="1" stopColor="#e2e2e2" />
      </linearGradient>
    </defs>
    <rect x="796" y="277" width="97" height="111" rx="3" fill="#181b1f" />
    <path d="M847 286h8v94h-8zM860 286h8v94h-8z" fill="#0c0d0f" />
    <path d="M825.500 287v92M838.500 287v92" stroke="#35383c" strokeWidth="2" />
    {[287, ...scale.map(([y]) => y), 378].map((y) => (
      <path key={y} d={`M816.500 ${y}h4M830 ${y}h4M843 ${y}h3.500M868.500 ${y}h4`} stroke="#85888a" strokeWidth=".8" />
    ))}
    {scale.map(([y, t]) => (
      <g key={t} fontSize="4" fill="#b5b8ba">
        <text x="814" y={y + 1.500} textAnchor="end">
          {t}
        </text>
        <text x="875" y={y + 1.500}>{t}</text>
      </g>
    ))}
    <rect x="821.500" y="300.500" width="8" height="15" rx="1" fill="url(#cap)" />
    <rect x="834.500" y="300.500" width="8" height="15" rx="1" fill="url(#cap)" />
    <path d="M821.500 308h8M834.500 308h8" stroke="#333" />
  </Chart>
);

const MasterSection = () => (
  <Master>
    <EditorTitle>
      <Icon name="star" size={6} color="#1d5d92" />
      <Heading>
        マスター<span>セクション</span>
      </Heading>
      <Spacer />
      <Icon name="menu" size={5} />
    </EditorTitle>
    <MasterBody>
      <NameRow>
        <Power aria-label="電源">
          <Icon name="power" size={7} />
        </Power>
        <NameField aria-label="プリセット名" defaultValue="名称未設定" />
        <NameTools>
          <Icon name="filter" />
          <Icon name="snapLeft" size={6} />
          <Icon name="checkbox" />
        </NameTools>
      </NameRow>
      <SectionHead>
        エフェクト
        <HeadButton $bg="#42cc28" aria-label="エフェクトの有効">
          <Icon name="link" size={8} />
        </HeadButton>
      </SectionHead>
      <Slots>
        <Slot $on>
          <Icon name="eq" size={5} />
          <Icon name="ramp" size={6} />
          MasterRig
          <Spacer />
          <Icon name="solo" size={6} />
          <Icon name="bypass" size={7} />
        </Slot>
        <Slot aria-label="空きスロット">
          <Icon name="eq" size={5} />
          <Icon name="ramp" size={6} />
          <Spacer />
          <Icon name="solo" size={6} />
          <Icon name="bypass" size={7} />
        </Slot>
        <Slot aria-label="エフェクトを追加">
          <Icon name="plus" size={6} color="#15202a" />
        </Slot>
      </Slots>
      <SectionHead $gap={4}>
        リサンプリング
        <HeadButton $bg="#2592dc" aria-label="リサンプリングの有効">
          <Icon name="hifi" size={8} />
        </HeadButton>
      </SectionHead>
      <Slots>
        <Slot $on>
          <Icon name="resample" size={6} />
          <Icon name="ramp" size={6} />
          44 100 Hz
          <Spacer />
          <Icon name="down" size={5} />
        </Slot>
      </Slots>
      <SectionHead $gap={4}>
        マスターレベル
        <HeadButton aria-label="チャンネル">
          <Icon name="strip" size={7} />
        </HeadButton>
      </SectionHead>
      <LevelBox>
        <LevelValues>
          <span>0 dB</span>
          <span>0 dB</span>
          <span>-5.66</span>
          <span>-88.3</span>
        </LevelValues>
        <MasterMeter />
        <MixButtons>
          <MixSet>
            <MixButton aria-label="リンク">
              <Icon name="eq" size={6} />
            </MixButton>
            <MixButton aria-label="複製">
              <Icon name="copies" />
            </MixButton>
          </MixSet>
          <MixSet>
            <MixButton $on aria-label="モード">
              <Icon name="drop" />
            </MixButton>
            <MixButton aria-label="ロック">
              <Icon name="lock" size={6} />
            </MixButton>
          </MixSet>
        </MixButtons>
      </LevelBox>
      <SectionHead $gap={4}>
        最終段エフェクト/ディザリング
        <HeadButton aria-label="グリッド">
          <Icon name="quad" size={7} />
        </HeadButton>
      </SectionHead>
      <Slots>
        {[0, 1].map((i) => (
          <Slot key={i} aria-label="空きスロット">
            <Icon name="ramp" size={6} />
            <Spacer />
            <Icon name="bypass" size={7} />
          </Slot>
        ))}
      </Slots>
      <SectionHead $gap={4}>
        プレイバック処理
        <HeadButton aria-label="モニター">
          <Icon name="monitor" size={8} />
        </HeadButton>
      </SectionHead>
      <SectionHead $gap={4}>
        スピーカー構成
        <HeadButton aria-label="スピーカー">
          <Icon name="speakerOut" size={8} />
        </HeadButton>
      </SectionHead>
      <RunButton>
        <Icon name="render" size={6} />
        実行
      </RunButton>
    </MasterBody>
  </Master>
);

/* ---------- ribbon ---------- */

const Cmd = ({ icon, text, more }: { icon?: string; text: string; more?: boolean }) => (
  <Command>
    {icon && (icon === "blank" ? <i /> : <Icon name={icon} size={7} />)}
    {text}
    {more && (
      <>
        <Spacer />
        <Icon name="down" size={4} />
      </>
    )}
  </Command>
);

const EditRibbon = () => (
  <Ribbon>
    <Group $w={51}>
      <GroupBody $cols="1fr">
        <BigCommand>
          <Icon name="source" size={13} />
          プロジェクトを編集
        </BigCommand>
      </GroupBody>
      <GroupName>ソース</GroupName>
    </Group>
    <Group $w={27}>
      <GroupBody $cols="1fr">
        <IconPad>
          <PadButton $on aria-label="範囲選択">
            <Icon name="selectBox" size={9} />
          </PadButton>
          <PadButton aria-label="エンベロープ">
            <Icon name="curve" size={9} />
          </PadButton>
          <PadButton aria-label="ペン">
            <Icon name="pencil" size={8} />
          </PadButton>
          <PadButton aria-label="再生">
            <Icon name="speaker" size={8} />
          </PadButton>
        </IconPad>
      </GroupBody>
      <GroupName>ツール</GroupName>
    </Group>
    <Group $w={78}>
      <GroupBody $cols="41px 1fr">
        <Stack $pad={3}>
          <Cmd icon="range" text="範囲" more />
          <Cmd icon="extend" text="拡張" more />
          <Cmd icon="blank" text="切り替え" />
        </Stack>
        <Stack>
          <Cmd icon="all" text="すべて" />
          <Cmd text="チャンネル" more />
          <Cmd text="リージョン" more />
        </Stack>
      </GroupBody>
      <GroupName>時間範囲</GroupName>
    </Group>
    <Group $w={123}>
      <GroupBody $cols="41px 26px 1fr">
        <Stack $pad={4}>
          <Cmd icon="cut" text="切り取り" />
          <Cmd icon="copy" text="コピー" more />
        </Stack>
        <BigCommand>
          <Icon name="paste" size={14} />
          貼り付け
        </BigCommand>
        <BigCommand>
          <Icon name="bigX" size={14} />
          貼り付けとクロスフェード
        </BigCommand>
      </GroupBody>
      <GroupName>クリップボード</GroupName>
    </Group>
    <Group $w={145}>
      <GroupBody $cols="64px 1fr">
        <Stack $pad={4}>
          <Cmd icon="trim" text="切り取る" />
          <Cmd icon="erase" text="削除" />
          <Cmd icon="fadeX" text="削除 (フェード適用)" />
        </Stack>
        <Stack $pad={3}>
          <Cmd icon="trim" text="選択範囲をミュート" />
          <Cmd icon="silence" text="無音部分の作成" more />
          <Cmd icon="swap" text="ステレオチャンネルを入れ替え" />
        </Stack>
      </GroupBody>
      <GroupName>切り取り</GroupName>
    </Group>
    <Group $w={22}>
      <GroupBody $cols="1fr">
        <Stack $pad={6}>
          <Icon name="nudgeR" size={9} />
          <Icon name="nudgeL" size={9} />
        </Stack>
      </GroupBody>
      <GroupName>ナッジ機能</GroupName>
    </Group>
    <Group $w={61}>
      <GroupBody $cols="1fr">
        <Stack $pad={4}>
          <CheckLabel>
            <input type="checkbox" defaultChecked />
            ゼロクロッシング
          </CheckLabel>
          <CheckLabel>
            <input type="checkbox" defaultChecked />
            吸着項目にスナップ
          </CheckLabel>
          <Cmd icon="magnet" text="吸着項目" more />
        </Stack>
      </GroupBody>
      <GroupName>スナップ</GroupName>
    </Group>
    <RibbonLogo>
      <Icon name="bigSine" size={24} />
    </RibbonLogo>
  </Ribbon>
);

const ribbonTabs: { icon: string; label: string; w: number; on?: boolean; kana?: boolean }[] = [
  { icon: "logo", label: "ファイル", w: 35, kana: true },
  { icon: "eye", label: "表示", w: 32 },
  { icon: "editE", label: "編集", w: 32, on: true },
  { icon: "insert", label: "挿入", w: 31 },
  { icon: "gears", label: "処理", w: 33 },
];

const IconButton = ({ name, label, size = 7 }: { name: string; label: string; size?: number }) => (
  <PlainButton aria-label={label}>
    <Icon name={name} size={size} />
  </PlainButton>
);

const RibbonGap = styled.span`
  width: 82px;
`;

const RibbonCaret = styled(PlainButton)`
  margin-left: auto;
  width: 11px;
`;

const transportA = ["tap", "clock", "arc", "barsPlay", "barsStop"];
const transportB = ["toStart", "stepPlay", "toEnd"];
const transportC: [string, number][] = [
  ["toStart", 11], ["toEnd", 11], ["rew", 17], ["ffw", 17], ["cycle", 17], ["stop", 17], ["play", 17], ["rec", 17],
];

export default function App() {
  return (
    <Shell>
      <GlobalStyle />
      <TitleBar>
        <Menu>
          <Icon name="logo" size={8} />
          {["ファイル", "メーター", "ツールウィンドウ", "ワークスペース", "ヘルプ"].map((m) => (
            <a key={m} href="#menu">
              {m}
            </a>
          ))}
        </Menu>
        <span>WaveLab - [test_sound.wav * (F:)]</span>
        <WindowControls>
          <IconButton name="expand" label="全画面" size={6} />
          <IconButton name="min" label="最小化" size={6} />
          <IconButton name="restore" label="元に戻す" size={6} />
          <IconButton name="close" label="閉じる" size={6} />
        </WindowControls>
      </TitleBar>
      <Body>
        <Rail>
          <RailTab>
            <Icon name="grid" size={6} />
            ビットメーター
          </RailTab>
          <RailTab $dim>
            <Icon name="disc" size={6} />
            プラグイン
          </RailTab>
        </Rail>
        <Main>
          <MeterRow>
            <Panel>
              <PanelTabs
                tabs={[
                  ["list", "ファイルブラウザー", 52],
                  ["grid", "プロジェクトマネージャー", 66],
                  ["marker", "マーカー", 32],
                  ["bolt", "エラー修正", 39],
                  ["peak", "スペクトロメーター", 53, true],
                  ["bars", "スペクトロスコープ", 52],
                ]}
              />
              <PanelTools capture />
              <Spectrometer />
            </Panel>
            <Panel>
              <PanelTabs
                tabs={[
                  ["steps", "レベルメーター", 45, true],
                  ["pen", "ラウドネスメーター", 52],
                  ["cross4", "オシロスコープ", 46],
                  ["wave", "ウェーブスコープ", 48],
                  ["check", "タスク", 26],
                ]}
              />
              <PanelTools />
              <LevelMeter />
            </Panel>
            <Panel>
              <PanelTabs
                tabs={[
                  ["scope", "位相スコープ", 43, true],
                  ["list", "タイムコード", 40],
                ]}
              />
              <PanelTools presets={false} />
              <PhaseScope />
            </Panel>
          </MeterRow>
          <LowerRow>
            <EditorColumn>
              <EditorWindow>
                <EditorTitle>
                  <Icon name="sine" size={7} />
                  <Heading>
                    オーディオ<span>エディター</span>
                  </Heading>
                  <Spacer />
                  <TitleTools>
                    <IconButton name="newDoc" label="新規" size={8} />
                    <IconButton name="folder" label="開く" size={8} />
                  </TitleTools>
                  <TitleTools>
                    <IconButton name="save" label="保存" size={8} />
                    <IconButton name="saveAs" label="名前を付けて保存" size={8} />
                  </TitleTools>
                  <TitleTools>
                    <Dim aria-label="ディスク">
                      <Icon name="disc" size={8} />
                    </Dim>
                  </TitleTools>
                  <TitleTools>
                    <IconButton name="undo" label="元に戻す" size={8} />
                    <Dim aria-label="やり直し">
                      <Icon name="redo" size={8} />
                    </Dim>
                  </TitleTools>
                  <IconButton name="left" label="戻る" size={9} />
                  <Dim aria-label="進む">
                    <Icon name="right" size={8} />
                  </Dim>
                  <SelectBox $w={47}>
                    <select aria-label="履歴">
                      <option></option>
                    </select>
                    <Icon name="down" size={5} />
                  </SelectBox>
                  <TitleTools>
                    <IconButton name="down" label="メニュー" size={5} />
                  </TitleTools>
                  <IconButton name="windowBox" label="ウィンドウ" size={6} />
                  <StripMenu aria-label="パネルメニュー">
                    <Icon name="menu" size={5} color="#2b3036" />
                  </StripMenu>
                </EditorTitle>
                <EditorBody>
                  <RibbonTabs role="tablist">
                    {ribbonTabs.map((t) => (
                      <RibbonTab key={t.label} role="tab" aria-selected={!!t.on} $w={t.w} $on={t.on} $kana={t.kana}>
                        <Icon name={t.icon} size={7} />
                        {t.label}
                      </RibbonTab>
                    ))}
                    <RibbonGap />
                    <RibbonTab role="tab" $w={32}>
                      <Icon name="steps" size={7} />
                      検出
                    </RibbonTab>
                    <RibbonTab role="tab" $w={45} $kana>
                      <Icon name="render" size={6} />
                      レンダリング
                    </RibbonTab>
                    <RibbonCaret aria-label="リボンを閉じる">
                      <Icon name="up" size={5} />
                    </RibbonCaret>
                  </RibbonTabs>
                  <EditRibbon />
                  <GroupBar>
                    <FileTab>
                      <Icon name="sine" size={8} />
                      ファイルグループ 1
                    </FileTab>
                    <AddButtons>
                      <IconButton name="plus" label="追加" size={6} />
                      <IconButton name="down" label="タブ一覧" size={4} />
                    </AddButtons>
                  </GroupBar>
                  <FileWindow>
                    <DocBar>
                      <FileTab $small>
                        <Icon name="sine" size={8} />
                        test_sound *
                      </FileTab>
                      <Spacer />
                      <DocTools>
                        <Icon name="frame" size={7} color="#6b6e72" />
                        <Icon name="menu" size={5} />
                      </DocTools>
                    </DocBar>
                    <WaveRow>
                      <WaveCell>
                        <Overview />
                      </WaveCell>
                      <SideBar>
                        <Wheel />
                      </SideBar>
                    </WaveRow>
                    <ViewSwitch at={0} size={61} />
                    <WaveRow>
                      <WaveCell>
                        <WaveView />
                      </WaveCell>
                      <SideBar>
                        <Icon name="up" size={6} />
                        <SideThumb />
                        <Icon name="down" size={6} />
                        <Wheel />
                      </SideBar>
                    </WaveRow>
                    <ViewSwitch at={26} size={2} />
                    <StatusRow>
                      <Readout>38 s 363 ms, -0.6 dB</Readout>
                      <StatusCell $w={43}>
                        <Icon name="cursorIcon" size={6} />
                        38 s 363 ms
                      </StatusCell>
                      <StatusCell $w={56}>
                        <Icon name="range" size={6} />1 ms
                      </StatusCell>
                      <StatusCell $w={14}>
                        <Spacer />
                        <Icon name="cup" size={6} />
                        <Spacer />
                      </StatusCell>
                      <StatusCell $w={35}>
                        <Icon name="zoom" size={6} />x 18:1
                      </StatusCell>
                      <StatusCell $w={87}>
                        <Icon name="sound" size={6} />
                        ステレオ 32 ビット浮動 44 100 Hz
                      </StatusCell>
                      <StatusCell $w={18}>
                        <Icon name="star" size={6} />
                        <Icon name="star" size={6} />
                      </StatusCell>
                    </StatusRow>
                  </FileWindow>
                </EditorBody>
              </EditorWindow>
              <Transport>
                <SelectBox $w={89} $dark>
                  <select aria-label="プリセット">
                    <option>初期設定</option>
                  </select>
                  <Icon name="down" size={6} />
                </SelectBox>
                <ButtonSet>
                  {transportA.map((n) => (
                    <TransportButton key={n} $w={11} aria-label={n}>
                      <Icon name={n} size={7} />
                    </TransportButton>
                  ))}
                </ButtonSet>
                <ButtonSet>
                  {transportB.map((n) => (
                    <TransportButton key={n} $w={11} aria-label={n}>
                      <Icon name={n} size={6} />
                    </TransportButton>
                  ))}
                </ButtonSet>
                <Arrows>
                  <Icon name="ffw" size={6} />
                </Arrows>
                <ButtonSet>
                  {transportC.map(([n, w]) => (
                    <TransportButton key={n} $w={w} aria-label={n}>
                      <Icon name={n} size={n === "stop" || n === "play" || n === "rec" ? 5 : 7} />
                    </TransportButton>
                  ))}
                </ButtonSet>
                <TimeDisplay>00 h 00 mn 38 s 363 ms</TimeDisplay>
              </Transport>
            </EditorColumn>
            <MasterSection />
          </LowerRow>
        </Main>
      </Body>
    </Shell>
  );
}
